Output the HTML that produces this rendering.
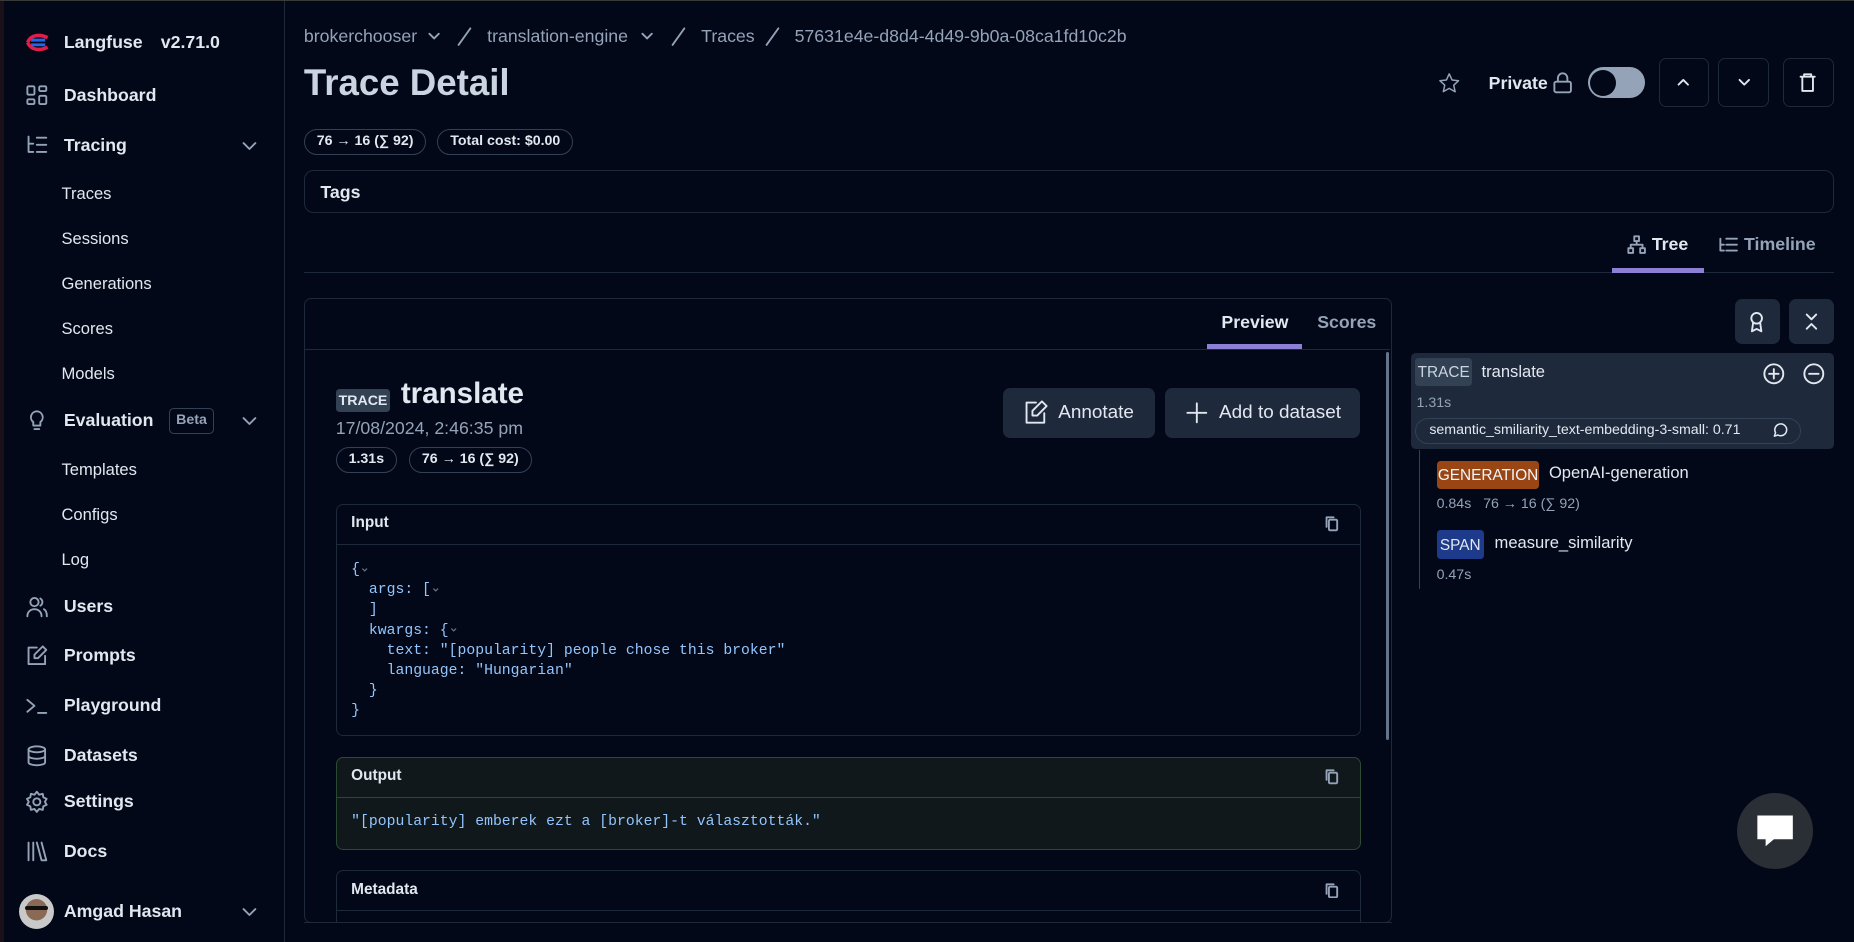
<!DOCTYPE html>
<html><head><meta charset="utf-8"><style>
*{box-sizing:border-box;margin:0;padding:0}
html,body{width:1854px;height:942px;overflow:hidden;background:#020817}
#w{zoom:1.18240;width:1568px;height:797px;position:relative;font-family:"Liberation Sans","DejaVu Sans",sans-serif;color:#e2e8f0;background:#020817;border-top:1px solid #3a3a3a}
.a{position:absolute;white-space:nowrap}
.b{font-weight:bold}
.m{color:#94a3b8}
.ic{position:absolute;stroke:#94a3b8;fill:none;stroke-width:1.6;stroke-linecap:round;stroke-linejoin:round}
.pill{position:absolute;border:1px solid #334155;border-radius:11px;height:22px;font-size:12px;font-weight:bold;line-height:20px;padding:0 10px}
.box{position:absolute;border:1px solid #1e293b;border-radius:6px}
.code{font-family:"Liberation Mono",monospace;font-size:12.5px;color:#93c5fd;line-height:17px}
.code div{height:17px}
.cv{display:inline-block;width:8px;height:8px;vertical-align:middle}
.btn{position:absolute;background:#1e293b;border-radius:6px}
.obtn{position:absolute;border:1px solid #1e293b;border-radius:6px}
</style></head><body><div id="w">
<div class="a" style="left:0;top:0;width:3px;height:797px;background:#1a1018"></div>
<div class="a" style="left:240px;top:0;width:1px;height:797px;background:#1e293b"></div>
<!-- sidebar -->
<svg class="a" style="left:20px;top:27px" width="22" height="16" viewBox="0 0 22 16"><path d="M3 8c3-7 11-7 17-4" stroke="#e11d48" stroke-width="3" fill="none"/><path d="M3 8c3 7 11 7 17 4" stroke="#e11d48" stroke-width="3" fill="none"/><path d="M6 6h12M6 10h12" stroke="#2563eb" stroke-width="2.5"/></svg>
<div class="a b" style="left:54px;top:26px;font-size:15px">Langfuse</div>
<div class="a b" style="left:136px;top:26px;font-size:15px">v2.71.0</div>
<svg class="ic" style="left:21px;top:70px" width="20" height="20" viewBox="0 0 20 20"><rect x="2" y="2" width="6" height="7" rx="1"/><rect x="12" y="2" width="6" height="4" rx="1"/><rect x="12" y="10" width="6" height="7" rx="1"/><rect x="2" y="13" width="6" height="4" rx="1"/></svg>
<div class="a b" style="left:54px;top:71px;font-size:15px">Dashboard</div>
<svg class="ic" style="left:21px;top:112px" width="20" height="20" viewBox="0 0 20 20"><path d="M3 3v13h4M3 9h4M10 4h8M10 10h8M10 16h8"/></svg>
<div class="a b" style="left:54px;top:113px;font-size:15px">Tracing</div>
<svg class="ic" style="left:203px;top:114px" width="16" height="16" viewBox="0 0 16 16"><path d="M3 6l5 5 5-5"/></svg>
<div class="a" style="left:52px;top:155px;font-size:14px">Traces</div>
<div class="a" style="left:52px;top:193px;font-size:14px">Sessions</div>
<div class="a" style="left:52px;top:231px;font-size:14px">Generations</div>
<div class="a" style="left:52px;top:269px;font-size:14px">Scores</div>
<div class="a" style="left:52px;top:307px;font-size:14px">Models</div>
<svg class="ic" style="left:21px;top:345px" width="20" height="20" viewBox="0 0 20 20"><path d="M10 2a5 5 0 0 0-3 9v3h6v-3a5 5 0 0 0-3-9zM8 17h4"/></svg>
<div class="a b" style="left:54px;top:346px;font-size:15px">Evaluation</div>
<div class="a b m" style="left:143px;top:344px;width:38px;height:22px;border:1px solid #334155;border-radius:4px;font-size:12px;line-height:20px;text-align:center">Beta</div>
<svg class="ic" style="left:203px;top:347px" width="16" height="16" viewBox="0 0 16 16"><path d="M3 6l5 5 5-5"/></svg>
<div class="a" style="left:52px;top:388px;font-size:14px">Templates</div>
<div class="a" style="left:52px;top:426px;font-size:14px">Configs</div>
<div class="a" style="left:52px;top:464px;font-size:14px">Log</div>
<svg class="ic" style="left:21px;top:502px" width="20" height="20" viewBox="0 0 20 20"><circle cx="8" cy="6" r="3.5"/><path d="M2 18c0-4 3-6 6-6s6 2 6 6M13 3a3.5 3.5 0 0 1 0 6M16 12c2 1 2.5 3 2.5 6"/></svg>
<div class="a b" style="left:54px;top:503px;font-size:15px">Users</div>
<svg class="ic" style="left:21px;top:544px" width="20" height="20" viewBox="0 0 20 20"><path d="M10 3H3v14h14v-7M15 2l3 3-7 7H8V9z"/></svg>
<div class="a b" style="left:54px;top:545px;font-size:15px">Prompts</div>
<svg class="ic" style="left:21px;top:586px" width="20" height="20" viewBox="0 0 20 20"><path d="M2 5l6 5-6 5M11 16h7"/></svg>
<div class="a b" style="left:54px;top:587px;font-size:15px">Playground</div>
<svg class="ic" style="left:21px;top:628px" width="20" height="20" viewBox="0 0 20 20"><ellipse cx="10" cy="4.5" rx="7" ry="2.5"/><path d="M3 4.5v11c0 1.4 3 2.5 7 2.5s7-1.1 7-2.5v-11M3 10c0 1.4 3 2.5 7 2.5s7-1.1 7-2.5"/></svg>
<div class="a b" style="left:54px;top:629px;font-size:15px">Datasets</div>
<svg class="ic" style="left:21px;top:667px" width="20" height="20" viewBox="0 0 20 20"><circle cx="10" cy="10" r="3"/><path d="M10 1.5l2 2.5 3-.8.5 3 2.8 1.3-1.5 2.5 1.5 2.5-2.8 1.3-.5 3-3-.8-2 2.5-2-2.5-3 .8-.5-3L1.7 12.5 3.2 10 1.7 7.5l2.8-1.3.5-3 3 .8z"/></svg>
<div class="a b" style="left:54px;top:668px;font-size:15px">Settings</div>
<svg class="ic" style="left:21px;top:709px" width="20" height="20" viewBox="0 0 20 20"><path d="M3 3v15M7 3v15M10 3l4 15h4L14 3"/></svg>
<div class="a b" style="left:54px;top:710px;font-size:15px">Docs</div>
<div class="a" style="left:16px;top:755px;width:30px;height:30px;border-radius:50%;background:radial-gradient(circle at 50% 45%,#8a6a55 0 40%,#c9c9c9 42%)"></div>
<div class="a" style="left:21px;top:765px;width:20px;height:4px;background:#111;border-radius:2px"></div>
<div class="a b" style="left:54px;top:761px;font-size:15px">Amgad Hasan</div>
<svg class="ic" style="left:203px;top:762px" width="16" height="16" viewBox="0 0 16 16"><path d="M3 6l5 5 5-5"/></svg>

<!-- header breadcrumb -->
<div class="a m" style="left:257px;top:21px;font-size:15px">brokerchooser</div>
<svg class="ic" style="left:361px;top:24px" width="12" height="12" viewBox="0 0 12 12"><path d="M2 4l4 4 4-4"/></svg>
<svg class="ic" style="left:385px;top:21px" width="16" height="18" viewBox="0 0 16 18"><path d="M13 2L3 16"/></svg>
<div class="a m" style="left:412px;top:21px;font-size:15px">translation-engine</div>
<svg class="ic" style="left:541px;top:24px" width="12" height="12" viewBox="0 0 12 12"><path d="M2 4l4 4 4-4"/></svg>
<svg class="ic" style="left:566px;top:21px" width="16" height="18" viewBox="0 0 16 18"><path d="M13 2L3 16"/></svg>
<div class="a m" style="left:593px;top:21px;font-size:15px">Traces</div>
<svg class="ic" style="left:645px;top:21px" width="16" height="18" viewBox="0 0 16 18"><path d="M13 2L3 16"/></svg>
<div class="a m" style="left:672px;top:21px;font-size:15px">57631e4e-d8d4-4d49-9b0a-08ca1fd10c2b</div>
<div class="a b" style="left:257px;top:52px;font-size:31px;color:#cbd5e1">Trace Detail</div>
<svg class="ic" style="left:1216px;top:60px" width="19" height="19" viewBox="0 0 24 24"><path d="M12 2l3 6.5 7 .8-5.2 4.8 1.5 7L12 17.5 5.7 21l1.5-7L2 9.3l7-.8z"/></svg>
<div class="a b" style="left:1259px;top:61px;font-size:15px">Private</div>
<svg class="ic" style="left:1313px;top:59px" width="18" height="20" viewBox="0 0 18 20"><rect x="2" y="9" width="14" height="9" rx="1.5"/><path d="M5 9V6a4 4 0 0 1 8 0v3"/></svg>
<div class="a" style="left:1343px;top:56px;width:48px;height:26px;border-radius:13px;background:#94a3b8"></div>
<div class="a" style="left:1345px;top:58px;width:22px;height:22px;border-radius:50%;background:#020817"></div>
<div class="obtn" style="left:1403px;top:48px;width:42px;height:42px"></div>
<svg class="ic" style="left:1417px;top:62px;stroke:#e2e8f0" width="14" height="14" viewBox="0 0 14 14"><path d="M3 9l4-4 4 4"/></svg>
<div class="obtn" style="left:1453px;top:48px;width:43px;height:42px"></div>
<svg class="ic" style="left:1468px;top:62px;stroke:#e2e8f0" width="14" height="14" viewBox="0 0 14 14"><path d="M3 5l4 4 4-4"/></svg>
<div class="obtn" style="left:1508px;top:48px;width:43px;height:42px"></div>
<svg class="ic" style="left:1520px;top:60px;stroke:#e2e8f0" width="18" height="18" viewBox="0 0 18 18"><path d="M3 4h12M6 4V2h6v2M4.5 4v12h9V4"/></svg>
<div class="pill" style="left:257px;top:108px">76 → 16 (∑ 92)</div>
<div class="pill" style="left:370px;top:108px">Total cost: $0.00</div>
<div class="box" style="left:257px;top:143px;width:1294px;height:36px;border-color:#1e293b;border-radius:8px"></div>
<div class="a b" style="left:271px;top:153px;font-size:15px">Tags</div>
<svg class="ic" style="left:1375px;top:197px" width="18" height="18" viewBox="0 0 18 18"><rect x="7" y="2" width="4" height="4"/><rect x="2" y="12" width="4" height="4"/><rect x="12" y="12" width="4" height="4"/><path d="M9 6v3M4 12v-3h10v3"/></svg>
<div class="a b" style="left:1397px;top:197px;font-size:15px">Tree</div>
<svg class="ic" style="left:1453px;top:197px" width="18" height="18" viewBox="0 0 18 18"><path d="M2 4v10h3M2 9h3M7 4h9M7 9h9M7 14h9"/></svg>
<div class="a b m" style="left:1475px;top:197px;font-size:15px">Timeline</div>
<div class="a" style="left:257px;top:229px;width:1294px;height:1px;background:#1e293b"></div>
<div class="a" style="left:1363px;top:226px;width:78px;height:4px;background:#8b7fd6"></div>

<!-- left panel -->
<div class="box" style="left:257px;top:251px;width:920px;height:529px;border-radius:6px"></div>
<div class="a" style="left:258px;top:294px;width:918px;height:1px;background:#1e293b"></div>
<div class="a b" style="left:1033px;top:263px;font-size:15px">Preview</div>
<div class="a b m" style="left:1114px;top:263px;font-size:15px">Scores</div>
<div class="a" style="left:1021px;top:290px;width:80px;height:4px;background:#8b7fd6"></div>
<div class="a" style="left:1172px;top:297px;width:3px;height:328px;background:#64748b;border-radius:2px"></div>
<div class="a b" style="left:284px;top:328px;width:46px;height:20px;background:#334155;border-radius:3px;font-size:12px;line-height:21px;text-align:center">TRACE</div>
<div class="a b" style="left:339px;top:318px;font-size:25px">translate</div>
<div class="a m" style="left:284px;top:353px;font-size:15px">17/08/2024, 2:46:35 pm</div>
<div class="pill" style="left:284px;top:377px;height:22px">1.31s</div>
<div class="pill" style="left:346px;top:377px">76 → 16 (∑ 92)</div>
<div class="btn" style="left:848px;top:327px;width:129px;height:43px"></div>
<svg class="ic" style="left:865px;top:337px;stroke:#e2e8f0" width="22" height="22" viewBox="0 0 22 22"><path d="M11 3H3v17h15v-8M16 2l4 4-8 8H8v-4z"/></svg>
<div class="a" style="left:895px;top:339px;font-size:16px">Annotate</div>
<div class="btn" style="left:985px;top:327px;width:165px;height:43px"></div>
<svg class="ic" style="left:1002px;top:338px;stroke:#e2e8f0" width="20" height="20" viewBox="0 0 20 20"><path d="M10 2v16M2 10h16"/></svg>
<div class="a" style="left:1031px;top:339px;font-size:16px">Add to dataset</div>

<div class="box" style="left:284px;top:425px;width:867px;height:197px"></div>
<div class="a" style="left:285px;top:459px;width:865px;height:1px;background:#1e293b"></div>
<div class="a b" style="left:297px;top:434px;font-size:13px">Input</div>
<svg class="ic" style="left:1119px;top:435px" width="14" height="14" viewBox="0 0 14 14"><rect x="5" y="4" width="7" height="9" rx="1"/><path d="M3 10V2h6"/></svg>
<div class="a code" style="left:297px;top:473px">
<div>{<svg class="cv" viewBox="0 0 8 8"><path d="M2 3l2 2 2-2" stroke="#64748b" fill="none"/></svg></div>
<div>&nbsp;&nbsp;args: [<svg class="cv" viewBox="0 0 8 8"><path d="M2 3l2 2 2-2" stroke="#64748b" fill="none"/></svg></div>
<div>&nbsp;&nbsp;]</div>
<div>&nbsp;&nbsp;kwargs: {<svg class="cv" viewBox="0 0 8 8"><path d="M2 3l2 2 2-2" stroke="#64748b" fill="none"/></svg></div>
<div>&nbsp;&nbsp;&nbsp;&nbsp;text: "[popularity] people chose this broker"</div>
<div>&nbsp;&nbsp;&nbsp;&nbsp;language: "Hungarian"</div>
<div>&nbsp;&nbsp;}</div>
<div>}</div></div>

<div class="box" style="left:284px;top:639px;width:867px;height:79px;background:#10181c;border-color:#2c4a32"></div>
<div class="a" style="left:285px;top:673px;width:865px;height:1px;background:#2c4a32"></div>
<div class="a b" style="left:297px;top:648px;font-size:13px">Output</div>
<svg class="ic" style="left:1119px;top:649px" width="14" height="14" viewBox="0 0 14 14"><rect x="5" y="4" width="7" height="9" rx="1"/><path d="M3 10V2h6"/></svg>
<div class="a code" style="left:297px;top:686px">"[popularity] emberek ezt a [broker]-t választották."</div>

<div class="box" style="left:284px;top:735px;width:867px;height:50px;border-bottom:none;border-radius:6px 6px 0 0"></div>
<div class="a" style="left:285px;top:769px;width:865px;height:1px;background:#1e293b"></div>
<div class="a b" style="left:297px;top:744px;font-size:13px">Metadata</div>
<svg class="ic" style="left:1119px;top:745px" width="14" height="14" viewBox="0 0 14 14"><rect x="5" y="4" width="7" height="9" rx="1"/><path d="M3 10V2h6"/></svg>
<div class="a" style="top:780px;height:17px;background:#020817;left:250px;width:930px"></div>
<div class="a" style="left:257px;top:778px;width:920px;height:2px;border-bottom:1px solid #1e293b"></div>

<!-- right tree -->
<div class="btn" style="left:1467px;top:252px;width:38px;height:38px"></div>
<svg class="ic" style="left:1477px;top:261px;stroke:#e2e8f0" width="18" height="20" viewBox="0 0 18 20"><circle cx="9" cy="7" r="4.5"/><path d="M6 11l-1 7 4-2 4 2-1-7"/></svg>
<div class="btn" style="left:1513px;top:252px;width:38px;height:38px"></div>
<svg class="ic" style="left:1524px;top:262px;stroke:#e2e8f0" width="16" height="18" viewBox="0 0 16 18"><path d="M4 3l4 4 4-4M4 15l4-4 4 4"/></svg>
<div class="a" style="left:1193px;top:298px;width:358px;height:81px;background:#1e293b;border-radius:4px"></div>
<div class="a" style="left:1197px;top:302px;width:48px;height:24px;background:#334155;border-radius:3px;font-size:13px;line-height:26px;text-align:center;color:#cbd5e1">TRACE</div>
<div class="a" style="left:1253px;top:305px;font-size:14px">translate</div>
<svg class="ic" style="left:1490px;top:305px;stroke:#e2e8f0" width="20" height="20" viewBox="0 0 20 20"><circle cx="10" cy="10" r="8"/><path d="M10 6v8M6 10h8"/></svg>
<svg class="ic" style="left:1524px;top:305px;stroke:#e2e8f0" width="20" height="20" viewBox="0 0 20 20"><circle cx="10" cy="10" r="8"/><path d="M6 10h8"/></svg>
<div class="a m" style="left:1198px;top:333px;font-size:12px">1.31s</div>
<div class="a" style="left:1197px;top:353px;width:326px;height:22px;border:1px solid #334155;border-radius:11px;font-size:12px;line-height:20px;padding-left:11px">semantic_smiliarity_text-embedding-3-small: 0.71</div>
<svg class="ic" style="left:1499px;top:356px;stroke:#e2e8f0;stroke-width:1.3" width="14" height="14" viewBox="0 0 14 14"><path d="M2 12l1-3a5 5 0 1 1 2 2z"/></svg>
<div class="a" style="left:1200px;top:380px;width:1px;height:117px;background:#334155"></div>
<div class="a" style="left:1215px;top:389px;width:87px;height:24px;background:#9a4614;border-radius:3px;font-size:13px;line-height:26px;text-align:center;color:#f1f5f9">GENERATION</div>
<div class="a" style="left:1310px;top:391px;font-size:14px">OpenAI-generation</div>
<div class="a m" style="left:1215px;top:419px;font-size:12px">0.84s&nbsp;&nbsp;&nbsp;76 → 16 (∑ 92)</div>
<div class="a" style="left:1215px;top:447px;width:40px;height:25px;background:#1e3a8a;border-radius:3px;font-size:13px;line-height:27px;text-align:center;color:#e2e8f0">SPAN</div>
<div class="a" style="left:1264px;top:450px;font-size:14px">measure_similarity</div>
<div class="a m" style="left:1215px;top:479px;font-size:12px">0.47s</div>

<div class="a" style="left:1469px;top:670px;width:64px;height:64px;border-radius:50%;background:#2a2e35"></div>
<svg class="a" style="left:1484px;top:686px" width="34" height="32" viewBox="0 0 34 32"><path d="M2 3h30v20H16l-7 6v-6H2z" fill="#fff"/></svg>
</div></body></html>
